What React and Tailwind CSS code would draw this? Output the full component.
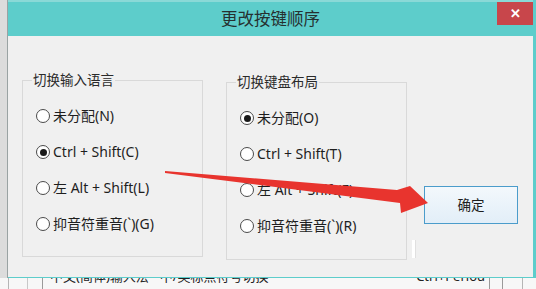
import React from 'react';

const font = "font-['Noto_Sans','Noto_Sans_CJK_SC',sans-serif]";

const Radio = ({ label, checked }) => (
    <div className="flex items-center h-[20px] gap-[3px] -ml-[1px]">
        <span className="w-[14px] h-[14px] rounded-full border border-[#4a4a4a] bg-white flex items-center justify-center shrink-0">
            {checked && <span className="w-[7px] h-[7px] rounded-full bg-[#1a1a1a]" />}
        </span>
        <span className="text-[14px] text-[#1e1e1e] whitespace-nowrap leading-none">{label}</span>
    </div>
);

const GroupBox = ({ title, options, className }) => (
    <fieldset className={`w-[181px] border border-[#d9d9d9] ${className}`}>
        <legend className="ml-[9px] px-[1px] text-[13.5px] leading-[18px] text-[#2a2a2a]">{title}</legend>
        <div className="flex flex-col gap-[16px] pt-[17px] pl-[14px]">
            {options.map((o) => (
                <Radio key={o.label} label={o.label} checked={o.checked} />
            ))}
        </div>
    </fieldset>
);

const languageOptions = [
    { label: '未分配(N)' },
    { label: 'Ctrl + Shift(C)', checked: true },
    { label: '左 Alt + Shift(L)' },
    { label: '抑音符重音(`)(G)' },
];

const layoutOptions = [
    { label: '未分配(O)', checked: true },
    { label: 'Ctrl + Shift(T)' },
    { label: '左 Alt + Shift(F)' },
    { label: '抑音符重音(`)(R)' },
];

export default function App() {
    return (
        <div className={`relative w-[536px] h-[289px] overflow-hidden bg-[#f4f4f4] ${font}`}>
            <div className="flex h-[278px]">
                {/* Background window edge */}
                <div className="w-[8px] bg-[#dcdcdc] border-r border-[#9aa3a3]" />

                {/* Dialog */}
                <div className="flex-1 flex flex-col border-r-[3px] border-b border-[#5dcdcb] bg-[#5dcdcb]">
                    {/* Title bar */}
                    <div className="h-[36px] flex items-start bg-[#5dcdcb] border-t-2 border-[#8ad9d7]">
                        <div className="w-[36px]" />
                        <div className="flex-1 text-center text-[16.5px] leading-[34px] text-[#263030]">更改按键顺序</div>
                        <div className="w-[36px] h-[23px] bg-[#c8464b] flex items-center justify-center text-white text-[13px] font-bold leading-none">
                            ✕
                        </div>
                    </div>

                    {/* Client area */}
                    <div className="flex-1 flex bg-[#f0f0f0] pl-[14px]">
                        <GroupBox title="切换输入语言" options={languageOptions} className="mt-[35px] h-[186px]" />
                        <GroupBox title="切换键盘布局" options={layoutOptions} className="ml-[23px] mt-[37px] h-[187px]" />

                        <div className="flex flex-col pl-[5px]">
                            <button className="ml-[12px] mt-[150px] w-[94px] h-[38px] border border-[#4b9ccb] bg-gradient-to-b from-[#f3f8fc] to-[#e2eef8] text-[13.5px] text-[#1e1e1e]">
                                确定
                            </button>
                            <div className="mt-[16px] w-[4px] h-[18px] bg-white border-r border-[#e0e0e0]" />
                        </div>
                    </div>
                </div>
            </div>

            {/* Background list row peeking out below the dialog */}
            <div className="flex h-[11px] overflow-hidden bg-[#f7f7f7] text-[13px] text-[#222] leading-[18px]">
                <div className="w-[9px] border-r border-[#b5b5b5]" />
                <div className="w-[19px] border-r border-[#c8c8c8]" />
                <div className="w-[15px] border-r border-[#9a9a9a]" />
                <div className="w-[446px] -mt-[11px] pl-[7px] flex whitespace-nowrap">
                    <span>中文(简体)输入法 - 中/英标点符号切换</span>
                    <span className="ml-auto mr-[4px]">Ctrl+Period</span>
                </div>
                <div className="w-[14px] border-l border-r border-[#9a9a9a]" />
                <div className="w-[20px] border-r border-[#b5b5b5]" />
                <div className="flex-1" />
            </div>

            {/* Red annotation arrow */}
            <svg className="absolute inset-0 pointer-events-none" width="536" height="289" viewBox="0 0 536 289">
                <path d="M165 171 L397 190 L410 186 L428 203 L401 213 L400 203 L165 173 Z" fill="#e8342e" />
            </svg>
        </div>
    );
}
